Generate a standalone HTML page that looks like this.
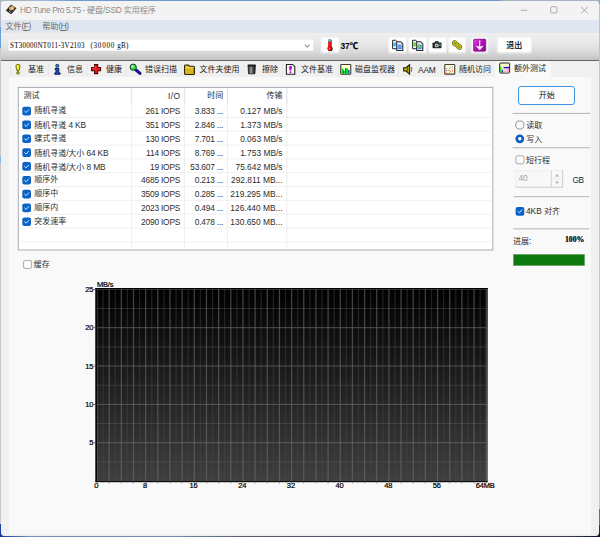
<!DOCTYPE html>
<html lang="zh-CN"><head><meta charset="utf-8"><title>HD Tune Pro 5.75 - 硬盘/SSD 实用程序</title>
<style>
*{box-sizing:border-box;margin:0;padding:0}
html,body{width:600px;height:537px;overflow:hidden}
body{position:relative;background:#c6c6c6;font-family:"Liberation Sans","Noto Sans CJK SC",sans-serif;font-size:8px;color:#222;line-height:1}
div,svg{position:absolute}
span{position:static}
.t{white-space:nowrap;line-height:12px;height:12px;font-size:8px;color:#2e2e2e}
.t i{font-style:normal;font-size:8.4px;letter-spacing:-0.2px}
.r{text-align:right}
.b{font-weight:bold}
#win{left:1.2px;top:1px;width:597.5px;height:534.6px;background:#f0f0f0;border-radius:3.5px;overflow:hidden}
#title{left:0;top:0;width:598px;height:19.3px;background:#f3f3f3}
#menu{left:0;top:19.3px;width:598px;height:12.4px;background:#dfe6ef}
#tool{left:0;top:32px;width:598px;height:27px;background:linear-gradient(#eeeeee,#ececec 20%,#e4e4e4 50%,#d4d4d4 78%,#c2c2c2)}
#toolline{left:0;top:58.5px;width:598px;height:1.2px;background:#666}
#page{left:7.4px;top:76px;width:582.2px;height:457px;background:#f9f9f9}
.tabsep{top:62.5px;width:1px;height:13px;background:#e6e6e6}
</style></head>
<body>
<div style="left:0.00px;top:0.00px;width:600.00px;height:2.00px;background:linear-gradient(90deg,#a8b4c0 0,#a8b4c0 5%,#9cbce0 7%,#6f9bd2 12%,#6f9bd2 50%,#7096d0 83%,#a6b2c0 84%,#a6b2c0 100%)"></div>
<div style="left:0.00px;top:0.00px;width:2.00px;height:27.00px;background:#b0bac6"></div>
<div style="left:0.00px;top:27.00px;width:2.00px;height:21.00px;background:#6aa0d8"></div>
<div style="left:0.00px;top:48.00px;width:2.00px;height:108.00px;background:#c8c8c8"></div>
<div style="left:0.00px;top:156.00px;width:2.00px;height:7.00px;background:#8fb4dc"></div>
<div style="left:0.00px;top:163.00px;width:2.00px;height:361.00px;background:#c8c8c8"></div>
<div style="left:0.00px;top:523.50px;width:3.00px;height:14.00px;background:#1f3f9c"></div>
<div style="left:598.00px;top:0.00px;width:2.00px;height:4.00px;background:#8ab0d4"></div>
<div style="left:598.00px;top:4.00px;width:2.00px;height:505.00px;background:#c4c4c4"></div>
<div style="left:598.00px;top:509.00px;width:2.00px;height:16.00px;background:#6c6c7a"></div>
<div style="left:598.00px;top:525.00px;width:2.00px;height:12.00px;background:#30304c"></div>
<div style="left:0.00px;top:533.00px;width:600.00px;height:4.00px;background:linear-gradient(90deg,#16309a 0,#3a5cb0 2%,#7890b8 5%,#7088a8 30%,#585f6c 40%,#4a5264 65%,#343c54 95%,#0a1238 100%)"></div>
<div id="win"><div id="title"></div><div id="menu"></div><div id="tool"></div><div id="toolline"></div><div id="page"></div></div>
<svg style="left:5px;top:4px" width="14" height="13"><g transform="translate(0 0)"><path d="M1.2 6.6 L5.9 0.9 L11.1 4.2 L6.1 10 Z" fill="#222" stroke="#222" stroke-width="0.6" stroke-linejoin="round"/>
<ellipse cx="6.7" cy="4.3" rx="2.7" ry="2.1" fill="#e0a64e" transform="rotate(-18 6.7 4.3)"/>
<ellipse cx="7" cy="4.2" rx="1" ry="0.75" fill="#dcdcec" transform="rotate(-18 7 4.2)"/>
<path d="M4 7.1 L6 8.6" stroke="#b8b8b8" stroke-width="0.9"/></g></svg>
<div class="t " style="left:20.00px;top:4.40px;color:#8c8c8c"><i style="letter-spacing:-0.4px">HD Tune Pro 5.75 - </i>硬盘<i>/SSD</i> 实用程序</div>
<svg style="left:520px;top:9px" width="10" height="4"><g transform="translate(0 0)"><path d="M0.8 1.25 H7.5" stroke="#a0a0a0" stroke-width="0.85"/></g></svg>
<svg style="left:549px;top:5px" width="11" height="11"><g transform="translate(0 0)"><rect x="1.7" y="1.7" width="6.2" height="6.2" rx="1" fill="none" stroke="#a0a0a0" stroke-width="0.85"/></g></svg>
<svg style="left:580px;top:6px" width="10" height="10"><g transform="translate(0 0)"><path d="M1 0.9 L7.8 7.4 M7.8 0.9 L1 7.4" stroke="#9c9c9c" stroke-width="0.8" fill="none"/></g></svg>
<div class="t " style="left:5.50px;top:20.40px;color:#6a6a6a">文件<i style="letter-spacing:-0.5px">(<u>F</u>)</i></div>
<div class="t " style="left:42.50px;top:20.40px;color:#6a6a6a">帮助<i style="letter-spacing:-0.5px">(<u>H</u>)</i></div>
<svg style="left:8px;top:39px" width="307" height="13"><g transform="translate(0.7 0.7)"><rect x="0" y="0" width="304.40" height="11.10" rx="0.8" fill="#fff"/></g></svg>
<div class="t cbtext" style="left:10.00px;top:40.40px;font-family:&quot;Liberation Serif&quot;,serif;font-size:7.1px;color:#000;letter-spacing:0.2px;transform:scale(1,1.16);transform-origin:0 50%">ST30000NT011-3V2103 <span style="letter-spacing:0.75px;margin-left:3.6px">(30000</span> <span style="margin-left:0.3px">gB)</span></div>
<svg style="left:304px;top:43px" width="8" height="7"><g transform="translate(0.4 0.9)"><path d="M0.6 0.7 L2.95 3.3 L5.3 0.7" fill="none" stroke="#686868" stroke-width="1"/></g></svg>
<svg style="left:320px;top:37px" width="21" height="18"><g transform="translate(0.5 0.1)"><rect x="0" y="0" width="19.20" height="16.7" rx="2.6" fill="#fff" fill-opacity="0.42"/><rect x="1.2" y="1" width="16.80" height="14" rx="1.6" fill="#fefefe"/></g></svg>
<svg style="left:325px;top:38px" width="11" height="15"><g transform="translate(0.6 0.8)"><rect x="3.1" y="0.6" width="2.9" height="9" rx="1.2" fill="#1a1a1a"/>
<circle cx="4.6" cy="9.9" r="2.5" fill="#1a1a1a"/>
<circle cx="3.2" cy="9.3" r="1.5" fill="#58c8c8"/>
<rect x="2.6" y="0.4" width="2.7" height="9" rx="1.2" fill="#ee1418"/>
<rect x="2.6" y="0.3" width="2.7" height="2.6" rx="1" fill="#30d0d8"/>
<circle cx="4.1" cy="9.6" r="2.25" fill="#ee1014"/>
<circle cx="3.9" cy="9.6" r="0.5" fill="#ffb0b0"/></g></svg>
<div class="t b" style="left:340.40px;top:38.60px;color:#000"><i style="font-size:8.4px;letter-spacing:-0.1px">37</i><span style="font-family:&quot;Noto Sans CJK SC&quot;,sans-serif;font-size:8.4px;font-weight:900;position:relative;top:0.6px;margin-left:0.2px">℃</span></div>
<svg style="left:388px;top:37px" width="21" height="18"><g transform="translate(0.05 0.1)"><rect x="0" y="0" width="19.15" height="16.7" rx="2.6" fill="#fff" fill-opacity="0.42"/><rect x="1.2" y="1" width="16.75" height="14" rx="1.6" fill="#fefefe"/></g></svg>
<svg style="left:408px;top:37px" width="21" height="18"><g transform="translate(0.05 0.1)"><rect x="0" y="0" width="19.15" height="16.7" rx="2.6" fill="#fff" fill-opacity="0.42"/><rect x="1.2" y="1" width="16.75" height="14" rx="1.6" fill="#fefefe"/></g></svg>
<svg style="left:428px;top:37px" width="21" height="18"><g transform="translate(0.05 0.1)"><rect x="0" y="0" width="19.15" height="16.7" rx="2.6" fill="#fff" fill-opacity="0.42"/><rect x="1.2" y="1" width="16.75" height="14" rx="1.6" fill="#fefefe"/></g></svg>
<svg style="left:447px;top:37px" width="21" height="18"><g transform="translate(0.8 0.1)"><rect x="0" y="0" width="18.40" height="16.7" rx="2.6" fill="#fff" fill-opacity="0.42"/><rect x="1.2" y="1" width="16.00" height="14" rx="1.6" fill="#fefefe"/></g></svg>
<svg style="left:470px;top:37px" width="20" height="18"><g transform="translate(0.8 0.1)"><rect x="0" y="0" width="17.80" height="16.7" rx="2.6" fill="#fff" fill-opacity="0.42"/><rect x="1.2" y="1" width="15.40" height="14" rx="1.6" fill="#fefefe"/></g></svg>
<svg style="left:496px;top:37px" width="37" height="18"><g transform="translate(0.8 0.1)"><rect x="0" y="0" width="35.20" height="16.7" rx="2.6" fill="#fff" fill-opacity="0.42"/><rect x="1.2" y="1" width="32.80" height="14" rx="1.6" fill="#fefefe"/></g></svg>
<svg style="left:392px;top:39px" width="13" height="13"><g transform="translate(0.1 0.8)"><path d="M0.5 0.5 H3.6 L5.4 2.3 V8.9 H0.5 Z" fill="#f8fbff" stroke="#262626" stroke-width="1"/>
<rect x="1.3" y="2.8" width="2.4" height="3.8" rx="0.8" fill="#38a8f8"/>
<path d="M4.6 1.9 H8.5 L10.7 4.1 V10.6 H4.6 Z" fill="#eaf1fc" stroke="#262626" stroke-width="1.05"/>
<rect x="5.6" y="4.9" width="4" height="4.4" fill="#3a8cf0"/>
<path d="M5.6 6.4 H9.6 M5.6 7.8 H9.6" stroke="#9cc4f8" stroke-width="0.4"/></g></svg>
<svg style="left:412px;top:39px" width="13" height="13"><g transform="translate(0.1 0.8)"><path d="M0.5 0.5 H3.6 L5.4 2.3 V8.9 H0.5 Z" fill="#f8fbff" stroke="#262626" stroke-width="1"/>
<rect x="1.3" y="2.8" width="2.4" height="3.8" rx="0.8" fill="#30c848"/>
<path d="M4.6 1.9 H8.5 L10.7 4.1 V10.6 H4.6 Z" fill="#eaf1fc" stroke="#262626" stroke-width="1.05"/>
<rect x="5.6" y="4.9" width="4" height="4.4" fill="#3a8cf0"/>
<path d="M5.6 6.4 H9.6 M5.6 7.8 H9.6" stroke="#9cc4f8" stroke-width="0.4"/><rect x="5.6" y="4.9" width="2.6" height="3" fill="#34c440"/><rect x="6.4" y="6" width="1.4" height="1.4" fill="#e4d020"/><rect x="2" y="4.2" width="1.2" height="1.2" fill="#e4d020"/></g></svg>
<svg style="left:432px;top:40px" width="11" height="10"><g transform="translate(0.2 0.8)"><rect x="0.3" y="1.7" width="9" height="5.8" rx="0.8" fill="#262626"/>
<rect x="2.8" y="0.4" width="3.6" height="1.8" fill="#262626"/>
<circle cx="4.5" cy="4.6" r="1.9" fill="#e4e4e4"/>
<circle cx="4.5" cy="4.6" r="1" fill="#4a4a4a"/>
<rect x="7" y="3.2" width="1.5" height="2" fill="#3cb03c"/></g></svg>
<svg style="left:451px;top:40px" width="13" height="12"><g transform="translate(0.8 0)"><g fill="none" stroke-linecap="round">
<ellipse cx="3.4" cy="3.5" rx="2.1" ry="1.5" transform="rotate(35 3.4 3.5)" stroke="#3c3c08" stroke-width="2.5"/>
<ellipse cx="7.1" cy="6.5" rx="2.1" ry="1.5" transform="rotate(35 7.1 6.5)" stroke="#3c3c08" stroke-width="2.5"/>
<ellipse cx="3.4" cy="3.5" rx="2.1" ry="1.5" transform="rotate(35 3.4 3.5)" stroke="#c4c408" stroke-width="1.6"/>
<ellipse cx="7.1" cy="6.5" rx="2.1" ry="1.5" transform="rotate(35 7.1 6.5)" stroke="#c4c408" stroke-width="1.6"/>
<path d="M3.2 2.9 L4 4 M6.9 5.9 L7.7 7" stroke="#9a9a9a" stroke-width="0.8"/>
</g></g></svg>
<svg style="left:473px;top:38px" width="15" height="15"><g transform="translate(0.2 0.8)"><defs><linearGradient id="pg" x1="0" y1="0" x2="1" y2="1"><stop offset="0" stop-color="#d848dc"/><stop offset="0.5" stop-color="#b010b4"/><stop offset="1" stop-color="#88088c"/></linearGradient></defs>
<rect x="0.3" y="0.3" width="12.3" height="12.2" rx="1.2" fill="url(#pg)" stroke="#700874" stroke-width="0.6"/>
<path d="M6.5 1.6 V8.6" fill="none" stroke="#fff" stroke-width="1.1"/>
<path d="M3 7.2 L6.5 11.3 L10 7.2 L6.5 8.3 Z" fill="#fff" stroke="#fff" stroke-width="0.5" stroke-linejoin="round"/></g></svg>
<div class="t " style="left:506.30px;top:39.60px;color:#000;font-weight:500">退出</div>
<div style="left:495.00px;top:60.60px;width:56.00px;height:17.00px;background:#f9f9f9;border-radius:2px 2px 0 0"></div>
<div class="tabsep" style="left:9.5px"></div>
<div class="tabsep" style="left:47.5px"></div>
<div class="tabsep" style="left:87.0px"></div>
<div class="tabsep" style="left:126.0px"></div>
<div class="tabsep" style="left:181.0px"></div>
<div class="tabsep" style="left:242.5px"></div>
<div class="tabsep" style="left:282.0px"></div>
<div class="tabsep" style="left:337.5px"></div>
<div class="tabsep" style="left:398.0px"></div>
<div class="tabsep" style="left:441.0px"></div>
<div class="t " style="left:28.00px;top:63.60px;color:#1c1c1c">基准</div>
<div class="t " style="left:67.00px;top:63.60px;color:#1c1c1c">信息</div>
<div class="t " style="left:106.00px;top:63.60px;color:#1c1c1c">健康</div>
<div class="t " style="left:145.00px;top:63.60px;color:#1c1c1c">错误扫描</div>
<div class="t " style="left:199.50px;top:63.60px;color:#1c1c1c">文件夹使用</div>
<div class="t " style="left:262.00px;top:63.60px;color:#1c1c1c">擦除</div>
<div class="t " style="left:301.00px;top:63.60px;color:#1c1c1c">文件基准</div>
<div class="t " style="left:355.00px;top:63.60px;color:#1c1c1c">磁盘监视器</div>
<div class="t " style="left:418.00px;top:63.60px;color:#1c1c1c"><i>AAM</i></div>
<div class="t " style="left:459.00px;top:63.60px;color:#1c1c1c">随机访问</div>
<div class="t " style="left:514.00px;top:62.60px;color:#1c1c1c">额外测试</div>
<svg style="left:15px;top:63px" width="7" height="13"><g transform="translate(0.2 0.8) scale(1.0000 1.0000)"><path d="M2.8 0.5 C4.6 0.5 5.1 1.6 4.7 3.4 L3.7 7.1 H1.9 L0.9 3.4 C0.5 1.6 1 0.5 2.8 0.5 Z" fill="#ece41c" stroke="#4a4a08" stroke-width="0.8"/><circle cx="2.8" cy="9.1" r="1.25" fill="#e4dc14" stroke="#4a4a08" stroke-width="0.8"/><path d="M2.2 1.8 V4.6" stroke="#fbf8a0" stroke-width="0.7"/></g></svg>
<svg style="left:54px;top:63px" width="8" height="13"><g transform="translate(0 0.8) scale(1.0000 1.0000)"><circle cx="3.3" cy="2" r="1.5" fill="#20b0e0" stroke="#081c50" stroke-width="0.9"/><path d="M1.2 4.5 H4.8 V9.1 H6.1 V10.4 H0.8 V9.1 H2 V5.8 H1.2 Z" fill="#1458e8" stroke="#06123c" stroke-width="0.95"/></g></svg>
<svg style="left:91px;top:64px" width="12" height="12"><g transform="translate(0 0) scale(1.0000 1.0000)"><path d="M3.5 0.6 H6.7 V3.5 H9.6 V6.7 H6.7 V9.6 H3.5 V6.7 H0.6 V3.5 H3.5 Z" fill="#ee1c1c" stroke="#4a0606" stroke-width="1.05"/><path d="M4.2 1.4 V4.2 H1.4" fill="none" stroke="#ff7070" stroke-width="0.6"/></g></svg>
<svg style="left:129px;top:63px" width="14" height="13"><g transform="translate(0.4 0.4) scale(1.0000 1.0000)"><path d="M6.4 6.4 L10.6 9.9" stroke="#0a0a3c" stroke-width="3" stroke-linecap="round"/><path d="M6.4 6.4 L10.6 9.9" stroke="#1414c8" stroke-width="1.8" stroke-linecap="round"/><circle cx="3.8" cy="3.8" r="3.15" fill="#30d848" stroke="#143414" stroke-width="0.9"/><circle cx="3.1" cy="3.1" r="1.2" fill="#b8fcc4"/></g></svg>
<svg style="left:183px;top:64px" width="14" height="13"><g transform="translate(0.8 0.1) scale(1.0000 1.0000)"><path d="M0.7 2 Q0.7 0.8 1.9 0.8 H4.6 L5.8 2.1 H9.6 Q10.7 2.1 10.7 3.2 V9.3 Q10.7 10.4 9.6 10.4 H1.8 Q0.7 10.4 0.7 9.3 Z" fill="#d6b41e" stroke="#2c2408" stroke-width="1.05"/><path d="M1.8 3.6 H9.6" stroke="#f6e478" stroke-width="0.9"/><path d="M9.9 4 V9.6" stroke="#8a7410" stroke-width="0.8"/></g></svg>
<svg style="left:247px;top:63px" width="11" height="13"><g transform="translate(0 0.8) scale(1.0000 1.0000)"><defs><linearGradient id="tg" x1="0" y1="0" x2="1" y2="0"><stop offset="0" stop-color="#1e1e1e"/><stop offset="0.4" stop-color="#9c9c9c"/><stop offset="0.62" stop-color="#5a5a5a"/><stop offset="1" stop-color="#141414"/></linearGradient></defs><path d="M1.1 2.2 H8.3 L7.9 10 H1.5 Z" fill="url(#tg)" stroke="#161616" stroke-width="0.8"/><rect x="0.5" y="0.6" width="8.4" height="1.9" rx="0.7" fill="#1c1c1c"/></g></svg>
<svg style="left:285px;top:63px" width="12" height="13"><g transform="translate(0.8 0.8) scale(1.0000 1.0000)"><path d="M0.6 0.6 H6.8 L9 2.8 V10.4 H0.6 Z" fill="#fafafa" stroke="#1c1c1c" stroke-width="1.05"/><path d="M4.7 2 C6.4 2 6.6 3.4 6.1 4.8 L5.3 7 H4.1 L3.3 4.8 C2.8 3.4 3 2 4.7 2 Z" fill="#c41cd4"/><circle cx="4.7" cy="8.5" r="0.95" fill="#a014b0"/></g></svg>
<svg style="left:340px;top:64px" width="13" height="12"><g transform="translate(0.2 0) scale(1.0000 1.0000)"><rect x="0.55" y="0.55" width="10" height="9.6" rx="0.7" fill="#ffffd2" stroke="#3e3e30" stroke-width="1.1"/><path d="M1.1 9.6 V4.6 Q1.8 3.8 2.6 4.6 L3.4 6.4 L4.4 7 L5.2 5.4 L6 4.2 Q7 3.6 7.6 4.4 L8.4 6 L9 6.2 L10 6.4 V9.6 Z" fill="#08ee10"/><path d="M3.1 9.6 V6.2 M5.4 9.6 V4 M8.2 9.6 V5.9" stroke="#3838ee" stroke-width="0.95"/></g></svg>
<svg style="left:403px;top:64px" width="13" height="12"><g transform="translate(0 0) scale(0.8923 0.9000)"><path d="M0.8 4.2 H3.4 L7.4 0.8 V11.2 L3.4 7.8 H0.8 Z" fill="#c4b414" stroke="#1e1c06" stroke-width="1.2"/><path d="M5.2 4 V8" stroke="#4a4408" stroke-width="1.2"/><path d="M9.2 3.4 Q10.8 6 9.2 8.6" fill="none" stroke="#707070" stroke-width="1.3"/></g></svg>
<svg style="left:444px;top:64px" width="13" height="12"><g transform="translate(0.2 0) scale(1.0000 1.0000)"><rect x="0.55" y="0.55" width="10" height="9.6" rx="0.7" fill="#ffffcc" stroke="#3e3e30" stroke-width="1.1"/><g fill="#9494e4"><rect x="1.9" y="3.9" width="1.1" height="1.1"/><rect x="1.9" y="5.8" width="1.1" height="1.1" fill="#a050d0"/><rect x="3.8" y="5.9" width="1" height="1"/><rect x="4.8" y="3.9" width="1.1" height="1.1"/><rect x="5.9" y="2.8" width="1.1" height="1.1"/><rect x="7.6" y="2" width="1.1" height="1.1" fill="#b4b4e0"/><rect x="7.6" y="3.8" width="1.1" height="1.1" fill="#b4b4e0"/></g><g fill="#ff7c4c"><rect x="4.8" y="5.8" width="1.1" height="1.1"/><rect x="5.8" y="6.8" width="1.1" height="1.1"/><rect x="4.8" y="7.8" width="1.1" height="1.1"/><rect x="7.7" y="5.8" width="1.1" height="1.8"/><rect x="1.8" y="8.6" width="1.2" height="1.2" fill="#f06040"/><rect x="1.9" y="7.2" width="1" height="1" fill="#ffc090"/></g></g></svg>
<svg style="left:499px;top:62px" width="13" height="13"><g transform="translate(0.2 0.5) scale(1.0000 1.0000)"><rect x="0.5" y="0.5" width="9.9" height="10" rx="0.8" fill="#fdfdc8" stroke="#1c1c1c" stroke-width="1"/><rect x="1" y="4" width="1.2" height="6" fill="#10e020"/><rect x="2.4" y="7.2" width="1.6" height="2.8" fill="#2a50c8"/><rect x="4.4" y="4.6" width="5.4" height="5.4" fill="#f6b8c0"/><rect x="4.4" y="4.4" width="5.4" height="1.3" fill="#1414e0"/><rect x="5.6" y="6.6" width="1.6" height="1.6" fill="#fff"/></g></svg>
<svg id="list" style="left:17px;top:86px" width="478" height="166"><rect x="1.30" y="1.40" width="474.50" height="162.60" fill="#fff" stroke="#a6abb6" stroke-width="1"/><path d="M1.80 31.35 H475.30" stroke="#f0f0f0" stroke-width="1"/><path d="M1.80 45.18 H475.30" stroke="#f0f0f0" stroke-width="1"/><path d="M1.80 59.01 H475.30" stroke="#f0f0f0" stroke-width="1"/><path d="M1.80 72.84 H475.30" stroke="#f0f0f0" stroke-width="1"/><path d="M1.80 86.67 H475.30" stroke="#f0f0f0" stroke-width="1"/><path d="M1.80 100.50 H475.30" stroke="#f0f0f0" stroke-width="1"/><path d="M1.80 114.33 H475.30" stroke="#f0f0f0" stroke-width="1"/><path d="M1.80 128.16 H475.30" stroke="#f0f0f0" stroke-width="1"/><path d="M1.80 141.99 H475.30" stroke="#f0f0f0" stroke-width="1"/><path d="M1.80 155.82 H475.30" stroke="#f0f0f0" stroke-width="1"/><path d="M114.70 1.90 V163.50" stroke="#eeeeee" stroke-width="1"/><path d="M114.70 2.40 V18" stroke="#e4e4e4" stroke-width="1"/><path d="M167.60 1.90 V163.50" stroke="#eeeeee" stroke-width="1"/><path d="M167.60 2.40 V18" stroke="#e4e4e4" stroke-width="1"/><path d="M210.40 1.90 V163.50" stroke="#eeeeee" stroke-width="1"/><path d="M210.40 2.40 V18" stroke="#e4e4e4" stroke-width="1"/><path d="M269.80 1.90 V163.50" stroke="#eeeeee" stroke-width="1"/><path d="M269.80 2.40 V18" stroke="#e4e4e4" stroke-width="1"/></svg>
<div class="t " style="left:23.60px;top:90.20px;color:#2a2a2a">测试</div>
<div class="t r " style="right:419.40px;top:90.20px;color:#2a2a2a"><i style="letter-spacing:0.5px">I/O</i></div>
<div class="t r " style="right:376.80px;top:90.20px;color:#2a2a2a">时间</div>
<div class="t r " style="right:317.60px;top:90.20px;color:#2a2a2a">传输</div>
<svg style="left:22px;top:106px" width="10" height="11"><g transform="translate(0.3 0.75) scale(0.8700 0.8700)"><rect x="0" y="0" width="10" height="10" rx="2.3" fill="#0a62c4"/><path d="M2.7 5.1 L4.4 6.7 L7.4 3.4" fill="none" stroke="#fff" stroke-width="0.95" stroke-linecap="round" stroke-linejoin="round"/></g></svg>
<div class="t " style="left:34.20px;top:105.30px;">随机寻道</div>
<div class="t r " style="right:419.80px;top:105.30px;"><i>261 IOPS</i></div>
<div class="t r " style="right:376.80px;top:105.30px;"><i>3.833 ...</i></div>
<div class="t r " style="right:317.50px;top:105.30px;"><i style="letter-spacing:0">0.127 MB/s</i></div>
<svg style="left:22px;top:120px" width="10" height="11"><g transform="translate(0.3 0.58) scale(0.8700 0.8700)"><rect x="0" y="0" width="10" height="10" rx="2.3" fill="#0a62c4"/><path d="M2.7 5.1 L4.4 6.7 L7.4 3.4" fill="none" stroke="#fff" stroke-width="0.95" stroke-linecap="round" stroke-linejoin="round"/></g></svg>
<div class="t " style="left:34.20px;top:119.13px;">随机寻道 <i>4 KB</i></div>
<div class="t r " style="right:419.80px;top:119.13px;"><i>351 IOPS</i></div>
<div class="t r " style="right:376.80px;top:119.13px;"><i>2.846 ...</i></div>
<div class="t r " style="right:317.50px;top:119.13px;"><i style="letter-spacing:0">1.373 MB/s</i></div>
<svg style="left:22px;top:134px" width="10" height="11"><g transform="translate(0.3 0.41) scale(0.8700 0.8700)"><rect x="0" y="0" width="10" height="10" rx="2.3" fill="#0a62c4"/><path d="M2.7 5.1 L4.4 6.7 L7.4 3.4" fill="none" stroke="#fff" stroke-width="0.95" stroke-linecap="round" stroke-linejoin="round"/></g></svg>
<div class="t " style="left:34.20px;top:132.96px;">蝶式寻道</div>
<div class="t r " style="right:419.80px;top:132.96px;"><i>130 IOPS</i></div>
<div class="t r " style="right:376.80px;top:132.96px;"><i>7.701 ...</i></div>
<div class="t r " style="right:317.50px;top:132.96px;"><i style="letter-spacing:0">0.063 MB/s</i></div>
<svg style="left:22px;top:148px" width="10" height="10"><g transform="translate(0.3 0.24) scale(0.8700 0.8700)"><rect x="0" y="0" width="10" height="10" rx="2.3" fill="#0a62c4"/><path d="M2.7 5.1 L4.4 6.7 L7.4 3.4" fill="none" stroke="#fff" stroke-width="0.95" stroke-linecap="round" stroke-linejoin="round"/></g></svg>
<div class="t " style="left:34.20px;top:146.79px;">随机寻道<i>/</i>大小 <i>64 KB</i></div>
<div class="t r " style="right:419.80px;top:146.79px;"><i>114 IOPS</i></div>
<div class="t r " style="right:376.80px;top:146.79px;"><i>8.769 ...</i></div>
<div class="t r " style="right:317.50px;top:146.79px;"><i style="letter-spacing:0">1.753 MB/s</i></div>
<svg style="left:22px;top:162px" width="10" height="10"><g transform="translate(0.3 0.07) scale(0.8700 0.8700)"><rect x="0" y="0" width="10" height="10" rx="2.3" fill="#0a62c4"/><path d="M2.7 5.1 L4.4 6.7 L7.4 3.4" fill="none" stroke="#fff" stroke-width="0.95" stroke-linecap="round" stroke-linejoin="round"/></g></svg>
<div class="t " style="left:34.20px;top:160.62px;">随机寻道<i>/</i>大小 <i>8 MB</i></div>
<div class="t r " style="right:419.80px;top:160.62px;"><i>19 IOPS</i></div>
<div class="t r " style="right:376.80px;top:160.62px;"><i>53.607 ...</i></div>
<div class="t r " style="right:317.50px;top:160.62px;"><i style="letter-spacing:0">75.642 MB/s</i></div>
<svg style="left:22px;top:175px" width="10" height="11"><g transform="translate(0.3 0.9) scale(0.8700 0.8700)"><rect x="0" y="0" width="10" height="10" rx="2.3" fill="#0a62c4"/><path d="M2.7 5.1 L4.4 6.7 L7.4 3.4" fill="none" stroke="#fff" stroke-width="0.95" stroke-linecap="round" stroke-linejoin="round"/></g></svg>
<div class="t " style="left:34.20px;top:174.45px;">顺序外</div>
<div class="t r " style="right:419.80px;top:174.45px;"><i>4685 IOPS</i></div>
<div class="t r " style="right:376.80px;top:174.45px;"><i>0.213 ...</i></div>
<div class="t r " style="right:317.50px;top:174.45px;"><i style="letter-spacing:0">292.811 MB...</i></div>
<svg style="left:22px;top:189px" width="10" height="11"><g transform="translate(0.3 0.73) scale(0.8700 0.8700)"><rect x="0" y="0" width="10" height="10" rx="2.3" fill="#0a62c4"/><path d="M2.7 5.1 L4.4 6.7 L7.4 3.4" fill="none" stroke="#fff" stroke-width="0.95" stroke-linecap="round" stroke-linejoin="round"/></g></svg>
<div class="t " style="left:34.20px;top:188.28px;">顺序中</div>
<div class="t r " style="right:419.80px;top:188.28px;"><i>3509 IOPS</i></div>
<div class="t r " style="right:376.80px;top:188.28px;"><i>0.285 ...</i></div>
<div class="t r " style="right:317.50px;top:188.28px;"><i style="letter-spacing:0">219.295 MB...</i></div>
<svg style="left:22px;top:203px" width="10" height="11"><g transform="translate(0.3 0.56) scale(0.8700 0.8700)"><rect x="0" y="0" width="10" height="10" rx="2.3" fill="#0a62c4"/><path d="M2.7 5.1 L4.4 6.7 L7.4 3.4" fill="none" stroke="#fff" stroke-width="0.95" stroke-linecap="round" stroke-linejoin="round"/></g></svg>
<div class="t " style="left:34.20px;top:202.11px;">顺序内</div>
<div class="t r " style="right:419.80px;top:202.11px;"><i>2023 IOPS</i></div>
<div class="t r " style="right:376.80px;top:202.11px;"><i>0.494 ...</i></div>
<div class="t r " style="right:317.50px;top:202.11px;"><i style="letter-spacing:0">126.440 MB...</i></div>
<svg style="left:22px;top:217px" width="10" height="11"><g transform="translate(0.3 0.39) scale(0.8700 0.8700)"><rect x="0" y="0" width="10" height="10" rx="2.3" fill="#0a62c4"/><path d="M2.7 5.1 L4.4 6.7 L7.4 3.4" fill="none" stroke="#fff" stroke-width="0.95" stroke-linecap="round" stroke-linejoin="round"/></g></svg>
<div class="t " style="left:34.20px;top:215.94px;">突发速率</div>
<div class="t r " style="right:419.80px;top:215.94px;"><i>2090 IOPS</i></div>
<div class="t r " style="right:376.80px;top:215.94px;"><i>0.478 ...</i></div>
<div class="t r " style="right:317.50px;top:215.94px;"><i style="letter-spacing:0">130.650 MB...</i></div>
<div style="left:518.00px;top:86.00px;width:56.90px;height:18.90px;background:#fdfdfd;border:0.9px solid #3f93e4;border-radius:3px"></div>
<div class="t " style="left:538.70px;top:89.60px;color:#111">开始</div>
<svg style="left:512px;top:112px" width="79" height="3"><g transform="translate(0.5 0.9)"><rect x="0" y="0" width="77.5" height="0.95" fill="#b0b0b0"/></g></svg>
<svg style="left:512px;top:147px" width="79" height="3"><g transform="translate(0.5 0.3)"><rect x="0" y="0" width="77.5" height="0.95" fill="#b0b0b0"/></g></svg>
<svg style="left:513px;top:196px" width="78" height="3"><g transform="translate(0.8 0.2)"><rect x="0" y="0" width="75.8" height="0.95" fill="#b0b0b0"/></g></svg>
<svg style="left:513px;top:228px" width="78" height="3"><g transform="translate(0.3 0.4)"><rect x="0" y="0" width="76.0" height="0.95" fill="#b0b0b0"/></g></svg>
<svg style="left:514px;top:120px" width="12" height="11"><g transform="translate(0.8 0)"><circle cx="5" cy="5" r="4.1" fill="#fbfbfb" stroke="#7c7c7c" stroke-width="0.8"/></g></svg>
<div class="t " style="left:526.30px;top:119.60px;">读取</div>
<svg style="left:514px;top:133px" width="12" height="12"><g transform="translate(0.8 0.8)"><circle cx="5" cy="5" r="4.4" fill="#0a60c0"/><circle cx="5" cy="5" r="1.7" fill="#fff"/></g></svg>
<div class="t " style="left:526.30px;top:133.50px;">写入</div>
<svg style="left:515px;top:155px" width="11" height="11"><g transform="translate(0.6 0.45) scale(0.8700 0.8700)"><rect x="0.4" y="0.4" width="9.2" height="9.2" rx="2" fill="#fdfdfd" stroke="#868686" stroke-width="0.8"/></g></svg>
<div class="t " style="left:526.00px;top:155.00px;">短行程</div>
<svg style="left:515px;top:170px" width="50" height="19"><g transform="translate(0 0)"><rect x="0.8" y="0.3" width="47.2" height="17.2" fill="#f8f8f8"/>
<path d="M1.1 0.3 V17.4 M0.8 0.6 H48" stroke="#e9e9e9" stroke-width="0.7" fill="none"/>
<path d="M47.7 0.3 V17.6 M0.8 17.2 H48" stroke="#c6c6c6" stroke-width="0.9" fill="none"/>
<path d="M36.4 0.6 V17" stroke="#cacaca" stroke-width="0.8"/>
<path d="M37 8.9 H47.4" stroke="#e2e2e2" stroke-width="0.7"/>
<path d="M40.4 6.4 L42.1 4.1 L43.8 6.4 Z" fill="#a4a4a4"/>
<path d="M40.4 11.6 L42.1 13.9 L43.8 11.6 Z" fill="#a4a4a4"/></g></svg>
<div class="t " style="left:518.60px;top:172.30px;color:#a0a0a0"><i>40</i></div>
<div class="t " style="left:572.50px;top:173.60px;"><i style="letter-spacing:-0.55px">GB</i></div>
<svg style="left:515px;top:206px" width="11" height="11"><g transform="translate(0.6 0.95) scale(0.8700 0.8700)"><rect x="0" y="0" width="10" height="10" rx="2.3" fill="#0a62c4"/><path d="M2.7 5.1 L4.4 6.7 L7.4 3.4" fill="none" stroke="#fff" stroke-width="0.95" stroke-linecap="round" stroke-linejoin="round"/></g></svg>
<div class="t " style="left:526.00px;top:204.90px;"><i style="letter-spacing:-0.05px">4KB</i> 对齐</div>
<div class="t " style="left:513.00px;top:234.80px;">进展<i>:</i></div>
<div class="t r b" style="right:15.60px;top:234.00px;font-family:&quot;Liberation Serif&quot;,serif;font-size:7.8px;color:#000;-webkit-text-stroke:0.2px #000">100%</div>
<div style="left:513.30px;top:253.80px;width:71.30px;height:12.10px;background:#0f7a10;border:0.6px solid #6aa86a"></div>
<svg style="left:23px;top:260px" width="10" height="10"><g transform="translate(0.2 0.05) scale(0.8700 0.8700)"><rect x="0.4" y="0.4" width="9.2" height="9.2" rx="2" fill="#fdfdfd" stroke="#868686" stroke-width="0.8"/></g></svg>
<div class="t " style="left:33.80px;top:259.40px;">缓存</div>
<svg style="left:95px;top:288px" width="394" height="197"><g transform="translate(0.5 0.0)"><defs><linearGradient id="g" x1="0" y1="0" x2="0" y2="1"><stop offset="0" stop-color="#000"/><stop offset="1" stop-color="#3f3f3f"/></linearGradient></defs><rect x="0" y="0" width="392.20" height="194.00" fill="url(#g)"/><path d="M1.50 0.90 V193.00" stroke="#6e6e6e" stroke-opacity="0.6" stroke-width="1.25"/><path d="M7.58 0.90 V193.00" stroke="#4a4a4a" stroke-opacity="0.42" stroke-width="1.25"/><path d="M13.66 0.90 V193.00" stroke="#6e6e6e" stroke-opacity="0.6" stroke-width="1.25"/><path d="M19.74 0.90 V193.00" stroke="#4a4a4a" stroke-opacity="0.42" stroke-width="1.25"/><path d="M25.82 0.90 V193.00" stroke="#6e6e6e" stroke-opacity="0.6" stroke-width="1.25"/><path d="M31.91 0.90 V193.00" stroke="#4a4a4a" stroke-opacity="0.42" stroke-width="1.25"/><path d="M37.99 0.90 V193.00" stroke="#6e6e6e" stroke-opacity="0.6" stroke-width="1.25"/><path d="M44.07 0.90 V193.00" stroke="#4a4a4a" stroke-opacity="0.42" stroke-width="1.25"/><path d="M50.15 0.90 V193.00" stroke="#6e6e6e" stroke-opacity="0.6" stroke-width="1.25"/><path d="M56.23 0.90 V193.00" stroke="#4a4a4a" stroke-opacity="0.42" stroke-width="1.25"/><path d="M62.31 0.90 V193.00" stroke="#6e6e6e" stroke-opacity="0.6" stroke-width="1.25"/><path d="M68.39 0.90 V193.00" stroke="#4a4a4a" stroke-opacity="0.42" stroke-width="1.25"/><path d="M74.47 0.90 V193.00" stroke="#6e6e6e" stroke-opacity="0.6" stroke-width="1.25"/><path d="M80.56 0.90 V193.00" stroke="#4a4a4a" stroke-opacity="0.42" stroke-width="1.25"/><path d="M86.64 0.90 V193.00" stroke="#6e6e6e" stroke-opacity="0.6" stroke-width="1.25"/><path d="M92.72 0.90 V193.00" stroke="#4a4a4a" stroke-opacity="0.42" stroke-width="1.25"/><path d="M98.80 0.90 V193.00" stroke="#6e6e6e" stroke-opacity="0.6" stroke-width="1.25"/><path d="M104.88 0.90 V193.00" stroke="#4a4a4a" stroke-opacity="0.42" stroke-width="1.25"/><path d="M110.96 0.90 V193.00" stroke="#6e6e6e" stroke-opacity="0.6" stroke-width="1.25"/><path d="M117.04 0.90 V193.00" stroke="#4a4a4a" stroke-opacity="0.42" stroke-width="1.25"/><path d="M123.12 0.90 V193.00" stroke="#6e6e6e" stroke-opacity="0.6" stroke-width="1.25"/><path d="M129.21 0.90 V193.00" stroke="#4a4a4a" stroke-opacity="0.42" stroke-width="1.25"/><path d="M135.29 0.90 V193.00" stroke="#6e6e6e" stroke-opacity="0.6" stroke-width="1.25"/><path d="M141.37 0.90 V193.00" stroke="#4a4a4a" stroke-opacity="0.42" stroke-width="1.25"/><path d="M147.45 0.90 V193.00" stroke="#6e6e6e" stroke-opacity="0.6" stroke-width="1.25"/><path d="M153.53 0.90 V193.00" stroke="#4a4a4a" stroke-opacity="0.42" stroke-width="1.25"/><path d="M159.61 0.90 V193.00" stroke="#6e6e6e" stroke-opacity="0.6" stroke-width="1.25"/><path d="M165.69 0.90 V193.00" stroke="#4a4a4a" stroke-opacity="0.42" stroke-width="1.25"/><path d="M171.78 0.90 V193.00" stroke="#6e6e6e" stroke-opacity="0.6" stroke-width="1.25"/><path d="M177.86 0.90 V193.00" stroke="#4a4a4a" stroke-opacity="0.42" stroke-width="1.25"/><path d="M183.94 0.90 V193.00" stroke="#6e6e6e" stroke-opacity="0.6" stroke-width="1.25"/><path d="M190.02 0.90 V193.00" stroke="#4a4a4a" stroke-opacity="0.42" stroke-width="1.25"/><path d="M196.10 0.90 V193.00" stroke="#6e6e6e" stroke-opacity="0.6" stroke-width="1.25"/><path d="M202.18 0.90 V193.00" stroke="#4a4a4a" stroke-opacity="0.42" stroke-width="1.25"/><path d="M208.26 0.90 V193.00" stroke="#6e6e6e" stroke-opacity="0.6" stroke-width="1.25"/><path d="M214.34 0.90 V193.00" stroke="#4a4a4a" stroke-opacity="0.42" stroke-width="1.25"/><path d="M220.42 0.90 V193.00" stroke="#6e6e6e" stroke-opacity="0.6" stroke-width="1.25"/><path d="M226.51 0.90 V193.00" stroke="#4a4a4a" stroke-opacity="0.42" stroke-width="1.25"/><path d="M232.59 0.90 V193.00" stroke="#6e6e6e" stroke-opacity="0.6" stroke-width="1.25"/><path d="M238.67 0.90 V193.00" stroke="#4a4a4a" stroke-opacity="0.42" stroke-width="1.25"/><path d="M244.75 0.90 V193.00" stroke="#6e6e6e" stroke-opacity="0.6" stroke-width="1.25"/><path d="M250.83 0.90 V193.00" stroke="#4a4a4a" stroke-opacity="0.42" stroke-width="1.25"/><path d="M256.91 0.90 V193.00" stroke="#6e6e6e" stroke-opacity="0.6" stroke-width="1.25"/><path d="M262.99 0.90 V193.00" stroke="#4a4a4a" stroke-opacity="0.42" stroke-width="1.25"/><path d="M269.07 0.90 V193.00" stroke="#6e6e6e" stroke-opacity="0.6" stroke-width="1.25"/><path d="M275.16 0.90 V193.00" stroke="#4a4a4a" stroke-opacity="0.42" stroke-width="1.25"/><path d="M281.24 0.90 V193.00" stroke="#6e6e6e" stroke-opacity="0.6" stroke-width="1.25"/><path d="M287.32 0.90 V193.00" stroke="#4a4a4a" stroke-opacity="0.42" stroke-width="1.25"/><path d="M293.40 0.90 V193.00" stroke="#6e6e6e" stroke-opacity="0.6" stroke-width="1.25"/><path d="M299.48 0.90 V193.00" stroke="#4a4a4a" stroke-opacity="0.42" stroke-width="1.25"/><path d="M305.56 0.90 V193.00" stroke="#6e6e6e" stroke-opacity="0.6" stroke-width="1.25"/><path d="M311.64 0.90 V193.00" stroke="#4a4a4a" stroke-opacity="0.42" stroke-width="1.25"/><path d="M317.72 0.90 V193.00" stroke="#6e6e6e" stroke-opacity="0.6" stroke-width="1.25"/><path d="M323.81 0.90 V193.00" stroke="#4a4a4a" stroke-opacity="0.42" stroke-width="1.25"/><path d="M329.89 0.90 V193.00" stroke="#6e6e6e" stroke-opacity="0.6" stroke-width="1.25"/><path d="M335.97 0.90 V193.00" stroke="#4a4a4a" stroke-opacity="0.42" stroke-width="1.25"/><path d="M342.05 0.90 V193.00" stroke="#6e6e6e" stroke-opacity="0.6" stroke-width="1.25"/><path d="M348.13 0.90 V193.00" stroke="#4a4a4a" stroke-opacity="0.42" stroke-width="1.25"/><path d="M354.21 0.90 V193.00" stroke="#6e6e6e" stroke-opacity="0.6" stroke-width="1.25"/><path d="M360.29 0.90 V193.00" stroke="#4a4a4a" stroke-opacity="0.42" stroke-width="1.25"/><path d="M366.38 0.90 V193.00" stroke="#6e6e6e" stroke-opacity="0.6" stroke-width="1.25"/><path d="M372.46 0.90 V193.00" stroke="#4a4a4a" stroke-opacity="0.42" stroke-width="1.25"/><path d="M378.54 0.90 V193.00" stroke="#6e6e6e" stroke-opacity="0.6" stroke-width="1.25"/><path d="M384.62 0.90 V193.00" stroke="#4a4a4a" stroke-opacity="0.42" stroke-width="1.25"/><path d="M390.70 0.90 V193.00" stroke="#6e6e6e" stroke-opacity="0.6" stroke-width="1.25"/><path d="M1.00 1.40 H391.20" stroke="#646464" stroke-opacity="0.5" stroke-width="1"/><path d="M1.00 20.56 H391.20" stroke="#646464" stroke-opacity="0.38" stroke-width="1"/><path d="M1.00 39.72 H391.20" stroke="#646464" stroke-opacity="0.8" stroke-width="1"/><path d="M1.00 58.88 H391.20" stroke="#646464" stroke-opacity="0.38" stroke-width="1"/><path d="M1.00 78.04 H391.20" stroke="#646464" stroke-opacity="0.8" stroke-width="1"/><path d="M1.00 97.20 H391.20" stroke="#646464" stroke-opacity="0.38" stroke-width="1"/><path d="M1.00 116.36 H391.20" stroke="#646464" stroke-opacity="0.8" stroke-width="1"/><path d="M1.00 135.52 H391.20" stroke="#646464" stroke-opacity="0.38" stroke-width="1"/><path d="M1.00 154.68 H391.20" stroke="#646464" stroke-opacity="0.8" stroke-width="1"/><path d="M1.00 173.84 H391.20" stroke="#646464" stroke-opacity="0.38" stroke-width="1"/><path d="M0.7 0 V194.00" stroke="#000" stroke-width="1.4"/><path d="M0 0.5 H392.20" stroke="#000" stroke-width="1"/><path d="M0 193.70 H392.20" stroke="#000" stroke-width="1"/><path d="M1.50 193.90 v1.6" stroke="#666" stroke-opacity="0.75" stroke-width="0.8"/><path d="M7.58 193.90 v0.9" stroke="#666" stroke-opacity="0.45" stroke-width="0.8"/><path d="M13.66 193.90 v1.6" stroke="#666" stroke-opacity="0.75" stroke-width="0.8"/><path d="M19.74 193.90 v0.9" stroke="#666" stroke-opacity="0.45" stroke-width="0.8"/><path d="M25.82 193.90 v1.6" stroke="#666" stroke-opacity="0.75" stroke-width="0.8"/><path d="M31.91 193.90 v0.9" stroke="#666" stroke-opacity="0.45" stroke-width="0.8"/><path d="M37.99 193.90 v1.6" stroke="#666" stroke-opacity="0.75" stroke-width="0.8"/><path d="M44.07 193.90 v0.9" stroke="#666" stroke-opacity="0.45" stroke-width="0.8"/><path d="M50.15 193.90 v1.6" stroke="#666" stroke-opacity="0.75" stroke-width="0.8"/><path d="M56.23 193.90 v0.9" stroke="#666" stroke-opacity="0.45" stroke-width="0.8"/><path d="M62.31 193.90 v1.6" stroke="#666" stroke-opacity="0.75" stroke-width="0.8"/><path d="M68.39 193.90 v0.9" stroke="#666" stroke-opacity="0.45" stroke-width="0.8"/><path d="M74.47 193.90 v1.6" stroke="#666" stroke-opacity="0.75" stroke-width="0.8"/><path d="M80.56 193.90 v0.9" stroke="#666" stroke-opacity="0.45" stroke-width="0.8"/><path d="M86.64 193.90 v1.6" stroke="#666" stroke-opacity="0.75" stroke-width="0.8"/><path d="M92.72 193.90 v0.9" stroke="#666" stroke-opacity="0.45" stroke-width="0.8"/><path d="M98.80 193.90 v1.6" stroke="#666" stroke-opacity="0.75" stroke-width="0.8"/><path d="M104.88 193.90 v0.9" stroke="#666" stroke-opacity="0.45" stroke-width="0.8"/><path d="M110.96 193.90 v1.6" stroke="#666" stroke-opacity="0.75" stroke-width="0.8"/><path d="M117.04 193.90 v0.9" stroke="#666" stroke-opacity="0.45" stroke-width="0.8"/><path d="M123.12 193.90 v1.6" stroke="#666" stroke-opacity="0.75" stroke-width="0.8"/><path d="M129.21 193.90 v0.9" stroke="#666" stroke-opacity="0.45" stroke-width="0.8"/><path d="M135.29 193.90 v1.6" stroke="#666" stroke-opacity="0.75" stroke-width="0.8"/><path d="M141.37 193.90 v0.9" stroke="#666" stroke-opacity="0.45" stroke-width="0.8"/><path d="M147.45 193.90 v1.6" stroke="#666" stroke-opacity="0.75" stroke-width="0.8"/><path d="M153.53 193.90 v0.9" stroke="#666" stroke-opacity="0.45" stroke-width="0.8"/><path d="M159.61 193.90 v1.6" stroke="#666" stroke-opacity="0.75" stroke-width="0.8"/><path d="M165.69 193.90 v0.9" stroke="#666" stroke-opacity="0.45" stroke-width="0.8"/><path d="M171.78 193.90 v1.6" stroke="#666" stroke-opacity="0.75" stroke-width="0.8"/><path d="M177.86 193.90 v0.9" stroke="#666" stroke-opacity="0.45" stroke-width="0.8"/><path d="M183.94 193.90 v1.6" stroke="#666" stroke-opacity="0.75" stroke-width="0.8"/><path d="M190.02 193.90 v0.9" stroke="#666" stroke-opacity="0.45" stroke-width="0.8"/><path d="M196.10 193.90 v1.6" stroke="#666" stroke-opacity="0.75" stroke-width="0.8"/><path d="M202.18 193.90 v0.9" stroke="#666" stroke-opacity="0.45" stroke-width="0.8"/><path d="M208.26 193.90 v1.6" stroke="#666" stroke-opacity="0.75" stroke-width="0.8"/><path d="M214.34 193.90 v0.9" stroke="#666" stroke-opacity="0.45" stroke-width="0.8"/><path d="M220.42 193.90 v1.6" stroke="#666" stroke-opacity="0.75" stroke-width="0.8"/><path d="M226.51 193.90 v0.9" stroke="#666" stroke-opacity="0.45" stroke-width="0.8"/><path d="M232.59 193.90 v1.6" stroke="#666" stroke-opacity="0.75" stroke-width="0.8"/><path d="M238.67 193.90 v0.9" stroke="#666" stroke-opacity="0.45" stroke-width="0.8"/><path d="M244.75 193.90 v1.6" stroke="#666" stroke-opacity="0.75" stroke-width="0.8"/><path d="M250.83 193.90 v0.9" stroke="#666" stroke-opacity="0.45" stroke-width="0.8"/><path d="M256.91 193.90 v1.6" stroke="#666" stroke-opacity="0.75" stroke-width="0.8"/><path d="M262.99 193.90 v0.9" stroke="#666" stroke-opacity="0.45" stroke-width="0.8"/><path d="M269.07 193.90 v1.6" stroke="#666" stroke-opacity="0.75" stroke-width="0.8"/><path d="M275.16 193.90 v0.9" stroke="#666" stroke-opacity="0.45" stroke-width="0.8"/><path d="M281.24 193.90 v1.6" stroke="#666" stroke-opacity="0.75" stroke-width="0.8"/><path d="M287.32 193.90 v0.9" stroke="#666" stroke-opacity="0.45" stroke-width="0.8"/><path d="M293.40 193.90 v1.6" stroke="#666" stroke-opacity="0.75" stroke-width="0.8"/><path d="M299.48 193.90 v0.9" stroke="#666" stroke-opacity="0.45" stroke-width="0.8"/><path d="M305.56 193.90 v1.6" stroke="#666" stroke-opacity="0.75" stroke-width="0.8"/><path d="M311.64 193.90 v0.9" stroke="#666" stroke-opacity="0.45" stroke-width="0.8"/><path d="M317.72 193.90 v1.6" stroke="#666" stroke-opacity="0.75" stroke-width="0.8"/><path d="M323.81 193.90 v0.9" stroke="#666" stroke-opacity="0.45" stroke-width="0.8"/><path d="M329.89 193.90 v1.6" stroke="#666" stroke-opacity="0.75" stroke-width="0.8"/><path d="M335.97 193.90 v0.9" stroke="#666" stroke-opacity="0.45" stroke-width="0.8"/><path d="M342.05 193.90 v1.6" stroke="#666" stroke-opacity="0.75" stroke-width="0.8"/><path d="M348.13 193.90 v0.9" stroke="#666" stroke-opacity="0.45" stroke-width="0.8"/><path d="M354.21 193.90 v1.6" stroke="#666" stroke-opacity="0.75" stroke-width="0.8"/><path d="M360.29 193.90 v0.9" stroke="#666" stroke-opacity="0.45" stroke-width="0.8"/><path d="M366.38 193.90 v1.6" stroke="#666" stroke-opacity="0.75" stroke-width="0.8"/><path d="M372.46 193.90 v0.9" stroke="#666" stroke-opacity="0.45" stroke-width="0.8"/><path d="M378.54 193.90 v1.6" stroke="#666" stroke-opacity="0.75" stroke-width="0.8"/><path d="M384.62 193.90 v0.9" stroke="#666" stroke-opacity="0.45" stroke-width="0.8"/><path d="M390.70 193.90 v1.6" stroke="#666" stroke-opacity="0.75" stroke-width="0.8"/></g></svg>
<div class="t " style="left:97.00px;top:279.20px;font-size:7.5px;color:#000;-webkit-text-stroke:0.22px #000;letter-spacing:-0.2px">MB/s</div>
<div class="t r " style="right:506.80px;top:284.00px;font-size:7.5px;color:#000;-webkit-text-stroke:0.22px #000;letter-spacing:-0.15px">25</div>
<svg style="left:93px;top:288px" width="4" height="3"><g transform="translate(0.6 0.9)"><rect x="0" y="0.1" width="2" height="0.8" fill="#444"/></g></svg>
<div class="t r " style="right:506.80px;top:322.32px;font-size:7.5px;color:#000;-webkit-text-stroke:0.22px #000;letter-spacing:-0.15px">20</div>
<svg style="left:93px;top:327px" width="4" height="3"><g transform="translate(0.6 0.22)"><rect x="0" y="0.1" width="2" height="0.8" fill="#444"/></g></svg>
<div class="t r " style="right:506.80px;top:360.64px;font-size:7.5px;color:#000;-webkit-text-stroke:0.22px #000;letter-spacing:-0.15px">15</div>
<svg style="left:93px;top:365px" width="4" height="3"><g transform="translate(0.6 0.54)"><rect x="0" y="0.1" width="2" height="0.8" fill="#444"/></g></svg>
<div class="t r " style="right:506.80px;top:398.96px;font-size:7.5px;color:#000;-webkit-text-stroke:0.22px #000;letter-spacing:-0.15px">10</div>
<svg style="left:93px;top:403px" width="4" height="3"><g transform="translate(0.6 0.86)"><rect x="0" y="0.1" width="2" height="0.8" fill="#444"/></g></svg>
<div class="t r " style="right:506.80px;top:437.28px;font-size:7.5px;color:#000;-webkit-text-stroke:0.22px #000;letter-spacing:-0.15px">5</div>
<svg style="left:93px;top:442px" width="4" height="3"><g transform="translate(0.6 0.18)"><rect x="0" y="0.1" width="2" height="0.8" fill="#444"/></g></svg>
<div class="t" style="left:86.30px;width:20px;text-align:center;top:479.60px;font-size:7.5px;color:#000;-webkit-text-stroke:0.22px #000;letter-spacing:-0.15px">0</div>
<div class="t" style="left:134.95px;width:20px;text-align:center;top:479.60px;font-size:7.5px;color:#000;-webkit-text-stroke:0.22px #000;letter-spacing:-0.15px">8</div>
<div class="t" style="left:183.60px;width:20px;text-align:center;top:479.60px;font-size:7.5px;color:#000;-webkit-text-stroke:0.22px #000;letter-spacing:-0.15px">16</div>
<div class="t" style="left:232.25px;width:20px;text-align:center;top:479.60px;font-size:7.5px;color:#000;-webkit-text-stroke:0.22px #000;letter-spacing:-0.15px">24</div>
<div class="t" style="left:280.90px;width:20px;text-align:center;top:479.60px;font-size:7.5px;color:#000;-webkit-text-stroke:0.22px #000;letter-spacing:-0.15px">32</div>
<div class="t" style="left:329.55px;width:20px;text-align:center;top:479.60px;font-size:7.5px;color:#000;-webkit-text-stroke:0.22px #000;letter-spacing:-0.15px">40</div>
<div class="t" style="left:378.20px;width:20px;text-align:center;top:479.60px;font-size:7.5px;color:#000;-webkit-text-stroke:0.22px #000;letter-spacing:-0.15px">48</div>
<div class="t" style="left:426.85px;width:20px;text-align:center;top:479.60px;font-size:7.5px;color:#000;-webkit-text-stroke:0.22px #000;letter-spacing:-0.15px">56</div>
<div class="t r " style="right:105.60px;top:479.60px;font-size:7.5px;color:#000;-webkit-text-stroke:0.22px #000;letter-spacing:-0.25px">64MB</div>
</body></html>
